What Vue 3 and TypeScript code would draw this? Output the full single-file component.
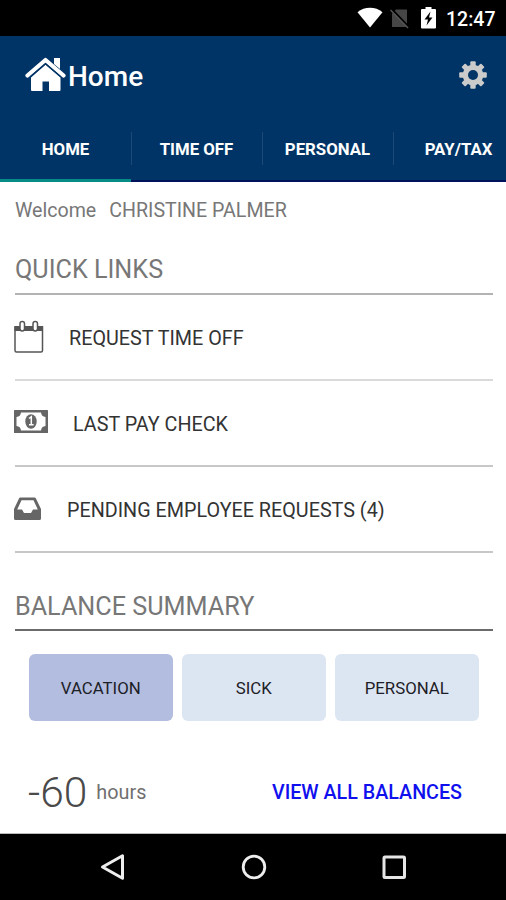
<script setup lang="ts">
import { ref } from 'vue'

interface Tab { label: string; id: string }
interface Link { label: string; icon: 'calendar' | 'money' | 'inbox' }

const tabs: Tab[] = [
  { label: 'HOME', id: 'home' },
  { label: 'TIME OFF', id: 'time' },
  { label: 'PERSONAL', id: 'personal' },
  { label: 'PAY/TAX', id: 'pay' },
]
const links: Link[] = [
  { label: 'REQUEST TIME OFF', icon: 'calendar' },
  { label: 'LAST PAY CHECK', icon: 'money' },
  { label: 'PENDING EMPLOYEE REQUESTS (4)', icon: 'inbox' },
]
const balances: string[] = ['VACATION', 'SICK', 'PERSONAL']
const activeTab = ref('home')
const activeBalance = ref('VACATION')
</script>

<template>
  <div class="phone">
    <div class="status">
      <svg class="wifi" width="26" height="21" viewBox="0 0 26 21"><path d="M.5 5.2C7.500-.7 18.500-.7 25.500 5.200L13 20.500Z" fill="#fff" /></svg>
      <svg class="sim" width="20" height="21" viewBox="0 0 20 21"><path d="M6 1.500H17V19H2V5.500Z" fill="#464646" /><path d="M1.500 1 19 19.500" stroke="#000" stroke-width="2.500" /><path d="M.5 2 18 20" stroke="#555" stroke-width="1.500" /></svg>
      <svg class="battery" width="15" height="22" viewBox="0 0 15 22"><path d="M4.500 0h6v2H14a1 1 0 0 1 1 1v17.500a1 1 0 0 1-1 1H1a1 1 0 0 1-1-1V3a1 1 0 0 1 1-1h3.500Z" fill="#fff" /><path d="M9.500 4.500 3.500 12.500H7L5.500 18.500 11.500 10.500H8Z" fill="#000" /></svg>
      <span class="clock">12:47</span>
    </div>

    <header class="header">
      <div class="title-row">
        <svg class="house" width="42" height="36" viewBox="0 0 42 36">
          <path d="M29 1h6v11l-6-5Z" fill="#fff" />
          <path d="M2.500 18.500 20.500 3 38.500 18.500" fill="none" stroke="#fff" stroke-width="4.200" stroke-linejoin="round" stroke-linecap="round" />
          <path d="M20.500 7.800 35.500 20.500V33a1 1 0 0 1-1 1H24V24.500h-6.500V34H7a1 1 0 0 1-1-1V20.500Z" fill="#fff" />
          <path d="M5 20 20.500 6.800 36 20" fill="none" stroke="#003466" stroke-width="1.100" />
        </svg>
        <h1>Home</h1>
        <svg class="gear" width="28" height="28" viewBox="-14 -14 28 28">
          <g fill="#cbcbcb">
            <rect v-for="n in 4" :key="n" x="-2.700" y="-13.800" width="5.400" height="27.600" rx="1" :transform="`rotate(${(n - 1) * 45})`" />
            <circle r="10.300" />
          </g>
          <circle r="5" fill="#003466" />
        </svg>
      </div>
      <nav class="tabs">
        <button v-for="t in tabs" :key="t.id" :class="['tab', t.id, { active: activeTab === t.id }]" @click="activeTab = t.id">{{ t.label }}</button>
      </nav>
    </header>

    <main class="content">
      <p class="welcome"><span class="greet">Welcome</span><span class="name">CHRISTINE PALMER</span></p>
      <h2 class="quick"><span>QUICK LINKS</span></h2>
      <ul class="links">
        <li v-for="l in links" :key="l.icon" :class="l.icon">
          <svg v-if="l.icon === 'calendar'" width="30" height="34" viewBox="0 0 30 34">
            <path d="M1 7h27.500v23.500a1.500 1.500 0 0 1-1.500 1.500H2.500A1.500 1.500 0 0 1 1 30.500Z" fill="#fff" stroke="#555" stroke-width="1.500" />
            <path d="M.5 6h28.500v5H.5Z" fill="#555" />
            <rect x="6" y="1.500" width="4.500" height="9.500" rx="2.200" fill="#fff" stroke="#555" stroke-width="1.500" />
            <rect x="19" y="1.500" width="4.500" height="9.500" rx="2.200" fill="#fff" stroke="#555" stroke-width="1.500" />
          </svg>
          <svg v-else-if="l.icon === 'money'" width="34" height="24" viewBox="0 0 34 24">
            <rect width="34" height="23" rx=".5" fill="#666" />
            <path d="M7 2.500h20a5 5 0 0 0 4.500 4.500v9a5 5 0 0 0-4.500 4.500H7A5 5 0 0 0 2.500 16V7A5 5 0 0 0 7 2.500Z" fill="#fff" />
            <ellipse cx="17" cy="11.500" rx="5.700" ry="7.300" fill="#666" />
            <path d="m15 8.500 2.300-1.800v7.800M15 14.700h4.600" fill="none" stroke="#fff" stroke-width="1.500" />
          </svg>
          <svg v-else width="28" height="24" viewBox="0 0 28 24">
            <path d="M6.500.5h14a1.500 1.500 0 0 1 1.400 1L27 12v9.500a1.500 1.500 0 0 1-1.500 1.500h-24A1.500 1.500 0 0 1 0 21.500V12L5 1.500a1.500 1.500 0 0 1 1.500-1Z" fill="#666" />
            <path d="M7.500 3.200h12L23.800 12.500H19l-2 3.500H10l-2-3.500H3.200Z" fill="#fff" />
          </svg>
          <span>{{ l.label }}</span>
        </li>
      </ul>
      <h2 class="summary"><span>BALANCE SUMMARY</span></h2>
      <div class="balances">
        <button v-for="b in balances" :key="b" :class="['balance', { selected: activeBalance === b }]" @click="activeBalance = b">{{ b }}</button>
      </div>
      <div class="total">
        <span class="amount">-60</span><span class="unit">hours</span>
        <a class="view">VIEW ALL BALANCES</a>
      </div>
    </main>

    <footer class="softkeys">
      <svg width="26" height="30" viewBox="0 0 26 30"><path d="M2.500 15 22.500 3.800V26.200Z" fill="none" stroke="#eee" stroke-width="3" stroke-linejoin="round" /></svg>
      <svg width="26" height="26" viewBox="0 0 26 26"><circle cx="13" cy="13" r="10.800" fill="none" stroke="#eee" stroke-width="2.800" /></svg>
      <svg width="26" height="26" viewBox="0 0 26 26"><rect x="3" y="3" width="20.500" height="20.500" rx="1" fill="none" stroke="#e6e6e6" stroke-width="3" /></svg>
    </footer>
  </div>
</template>

<style>
body { margin: 0; background: #fff; }
</style>
<style scoped>
* { box-sizing: border-box; }
.phone { width: 506px; height: 900px; display: flex; flex-direction: column; overflow: hidden; font-family: Roboto, sans-serif; background: #fff; white-space: nowrap; }
svg { display: block; flex: none; }
button { border: 0; background: none; font: inherit; padding: 0; }
.status { height: 36px; background: #000; display: flex; align-items: flex-start; padding: 7px 0 0 357px; }
.sim { margin: 1px 0 0 7px; }
.battery { margin-left: 11px; }
.clock { margin: 1px 0 0 10px; color: #fff; font-size: 19.500px; line-height: 23px; font-weight: 500; }
.header { height: 146px; background: #003466; display: flex; flex-direction: column; }
.title-row { height: 80px; display: flex; align-items: center; padding: 0 19px 0 25px; }
.house { margin-top: -2px; }
h1 { margin: 2px auto 0 1px; color: #fff; font-size: 28px; line-height: 32px; font-weight: 500; }
.gear { margin-top: -3px; }
.tabs { display: flex; height: 66px; width: 524px; }
.tab { position: relative; width: 131px; height: 66px; color: #fff; font-size: 16.800px; line-height: 66px; font-weight: 700; border-bottom: 2px solid #00115c; }
.tab.active { border-bottom: 3px solid #078b87; }
.tab + .tab::before { content: ''; position: absolute; left: 0; top: 16px; width: 1px; height: 33px; background: #1d4a77; }
.content { height: 652px; padding: 0 13px 0 15px; border-bottom: 1px solid #bbb; }
.welcome { margin: 0; height: 58px; padding-bottom: 2px; display: flex; align-items: center; gap: 13px; font-size: 19.600px; color: #777; }
h2 { margin: 0; color: #777; font-size: 25.200px; font-weight: 400; display: flex; align-items: center; }
.quick { height: 55px; padding-top: 5px; border-bottom: 2px solid #b3b3b3; }
.links { list-style: none; margin: 0; padding: 0; color: #333; font-size: 19.750px; }
.links li { height: 86px; display: flex; align-items: center; border-bottom: 2px solid #c8c8c8; }
.links li:first-child { border-color: #dadada; }
.links svg { margin-left: -1px; }
.links .money svg { margin-top: -2px; }
.links li span { margin: 2px 0 0 25px; }
.summary { height: 78px; padding-top: 31px; border-bottom: 2px solid #6b6b6b; }
.balances { display: flex; gap: 8.500px; padding: 23px 14px 0 13.500px; }
.balance { flex: 1; height: 67px; border-radius: 6px; background: #dce6f2; color: #1c2026; font-size: 16.800px; }
.balance.selected { background: #b3bddf; }
.total { height: 110px; display: flex; align-items: center; padding: 32px 31px 0 13px; color: #707070; }
.amount { font-size: 42.500px; font-weight: 300; color: #4a4a4a; }
.unit { font-size: 19.800px; margin-left: 9px; }
.view { margin-left: auto; color: #1010ee; font-size: 19.700px; font-weight: 500; }
.softkeys { height: 66px; background: #000; display: flex; align-items: center; justify-content: space-between; padding: 0 99px 0 100px; }
</style>
